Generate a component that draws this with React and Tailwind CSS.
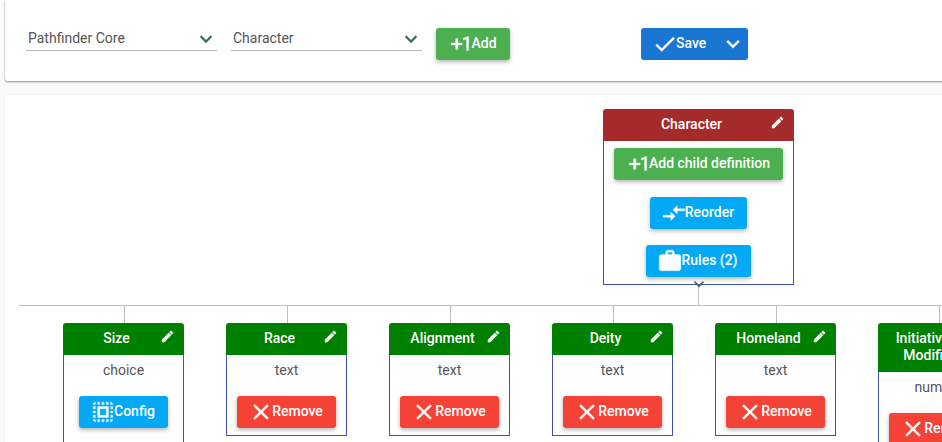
const P = {
  plus: "M10 7H8v4H4v2h4v4h2v-4h4v-2h-4V7zm10 11h-2V7.38L15 8.4V6.7L19.7 5h.3v13z",
  done: "M9 16.2L4.8 12l-1.4 1.4L9 19 21 7l-1.4-1.4L9 16.2z",
  close: "M19 6.41L17.59 5 12 10.59 6.41 5 5 6.41 10.59 12 5 17.59 6.41 19 12 13.41 17.59 19 19 17.59 13.41 12z",
  edit: "M3 17.25V21h3.75L17.81 9.94l-3.75-3.75L3 17.25zM20.71 7.04c.39-.39.39-1.02 0-1.41l-2.34-2.34c-.39-.39-1.02-.39-1.41 0l-1.83 1.83 3.75 3.75 1.83-1.83z",
  more: "M16.59 8.59L12 13.17 7.41 8.59 6 10l6 6 6-6z",
  work: "M20 6h-4V4c0-1.11-.89-2-2-2h-4c-1.11 0-2 .89-2 2v2H4c-1.11 0-1.99.89-1.99 2L2 19c0 1.11.89 2 2 2h16c1.11 0 2-.89 2-2V8c0-1.11-.89-2-2-2zm-6 0h-4V4h4v2z",
  compare: "M9.01 14H2v2h7.01v3L13 15l-3.99-4v3zm5.98-1v-3H22V8h-7.01V5L11 9l3.99 4z",
  select: "M3 5h2V3c-1.1 0-2 .9-2 2zm0 8h2v-2H3v2zm4 8h2v-2H7v2zM3 9h2V7H3v2zm10-6h-2v2h2V3zm6 0v2h2c0-1.1-.9-2-2-2zM5 21v-2H3c0 1.1.9 2 2 2zm-2-4h2v-2H3v2zM9 3H7v2h2V3zm2 18h2v-2h-2v2zm8-8h2v-2h-2v2zm0 8c1.1 0 2-.9 2-2h-2v2zm0-12h2V7h-2v2zm0 8h2v-2h-2v2zm-4 4h2v-2h-2v2zm0-16h2V3h-2v2zM7 17h10V7H7v10zm2-8h6v6H9V9z",
};

function Icon({ d, className = "w-[26px] h-[26px]" }) {
  return (
    <svg viewBox="0 0 24 24" className={className + " shrink-0 fill-current stroke-current stroke-[0.3]"}>
      <path d={d} />
    </svg>
  );
}

function Btn({ icon, children, className }) {
  return (
    <div className={"h-8 flex items-center justify-center rounded-[3px] text-white text-sm font-medium shadow-[0_2px_4px_rgba(0,0,0,0.3)] " + className}>
      <Icon d={icon} className="w-[26px] h-[26px] -ml-[2px]" />
      <span className="-ml-[2px] -mt-[2px]">{children}</span>
    </div>
  );
}

function Select({ label }) {
  return (
    <div className="w-[191px] h-[26px] border-b border-[#b5b5b5] flex items-center justify-between pl-0.5 text-sm text-[#555]">
      <span className="mt-[1px]">{label}</span>
      <Icon d={P.more} className="w-6 h-6 text-[#40665a] mr-[-1px] mt-[2px]" />
    </div>
  );
}

function Child({ title, kind, btn = "remove", tall }) {
  return (
    <div className="w-[121px] shrink-0 flex flex-col items-center">
      <div className="w-px h-[17px] bg-[#bdbdbd] ml-[2px]" />
      <div className="w-full">
        <div className={"bg-[#008000] text-white text-sm font-medium rounded-t-[3px] flex items-center justify-center relative text-center leading-[17px] " + (tall ? "h-[49px] pr-[18px]" : "h-[32px] pr-[14px]")}>
          {tall ? (
            <span className="-mt-[2px]">
              <span className="block pr-[14px]">{title[0]}</span>
              <span className="block">{title[1]}</span>
            </span>
          ) : (
            <span className="-mt-[2px]">{title}</span>
          )}
          {!tall && <Icon d={P.edit} className="w-[15px] h-[15px] absolute right-[9px] top-[6px]" />}
        </div>
        <div className={"border border-t-0 border-[#3f51b5] bg-white flex flex-col items-center text-sm text-[#555] pt-[5px] " + (btn === "config" ? "h-[120px]" : "h-[81px]")}>
          <span className="leading-5 h-5">{kind}</span>
          {btn === "config" ? (
            <Btn icon={P.select} className="bg-[#03a9f4] w-[89px] mt-[16px]">Config</Btn>
          ) : (
            <Btn icon={P.close} className="bg-[#f44336] w-[99px] mt-[16px]">Remove</Btn>
          )}
        </div>
      </div>
    </div>
  );
}

export default function App() {
  return (
    <div className="w-[942px] h-[442px] overflow-hidden bg-[#fafafa] pl-[5px] font-['Roboto',sans-serif]">
      <div className="w-[1000px] h-[81px] bg-white rounded-b-[3px] shadow-[0_1px_2px_rgba(0,0,0,0.45)] flex items-start pl-[21px] pt-[28px]">
        <div className="flex gap-[14px] items-start -mt-[3px]">
          <Select label="Pathfinder Core" />
          <Select label="Character" />
        </div>
        <Btn icon={P.plus} className="bg-[#4caf50] w-[74px] ml-[14px]">Add</Btn>
        <div className="ml-[131px] w-[107px] h-8 bg-[#1976d2] rounded-[3px] flex items-center text-white text-sm font-medium pl-[11px]">
          <Icon d={P.done} />
          <span className="-ml-[2px] -mt-[2px]">Save</span>
          <Icon d={P.more} className="w-[26px] h-[26px] ml-[14px]" />
        </div>
      </div>

      <div className="mt-[14px] w-[1000px] h-[400px] bg-white rounded-t-[3px] shadow-[0_0_2px_rgba(0,0,0,0.08)] pt-[14px]">
        <div className="ml-[598px] w-[191px]">
          <div className="h-[32px] bg-[#a52a2a] rounded-t-[3px] text-white text-sm font-medium flex items-center justify-center relative pr-[14px]">
            <span className="-mt-[2px]">Character</span>
            <Icon d={P.edit} className="w-[15px] h-[15px] absolute right-[9px] top-[6px]" />
          </div>
          <div className="h-[144px] border border-t-0 border-[#3f51b5] flex flex-col items-center pt-[7px] relative">
            <Btn icon={P.plus} className="bg-[#4caf50] w-[169px]">Add child definition</Btn>
            <Btn icon={P.compare} className="bg-[#03a9f4] w-[97px] mt-[17px]">Reorder</Btn>
            <Btn icon={P.work} className="bg-[#03a9f4] w-[105px] mt-[16px]">Rules (2)</Btn>
            <Icon d={P.more} className="w-[20px] h-[20px] absolute left-[85px] -bottom-[10px] text-[#40665a]" />
          </div>
        </div>
        <div className="ml-[693px] w-px h-[20px] bg-[#bdbdbd]" />
        <div className="ml-[14px] h-px bg-[#bdbdbd]" />
        <div className="ml-[58px] flex gap-[42px]">
          <Child title="Size" kind="choice" btn="config" />
          <Child title="Race" kind="text" />
          <Child title="Alignment" kind="text" />
          <Child title="Deity" kind="text" />
          <Child title="Homeland" kind="text" />
          <Child title={["Initiative", "Modifier"]} kind="number" tall />
        </div>
      </div>
    </div>
  );
}
